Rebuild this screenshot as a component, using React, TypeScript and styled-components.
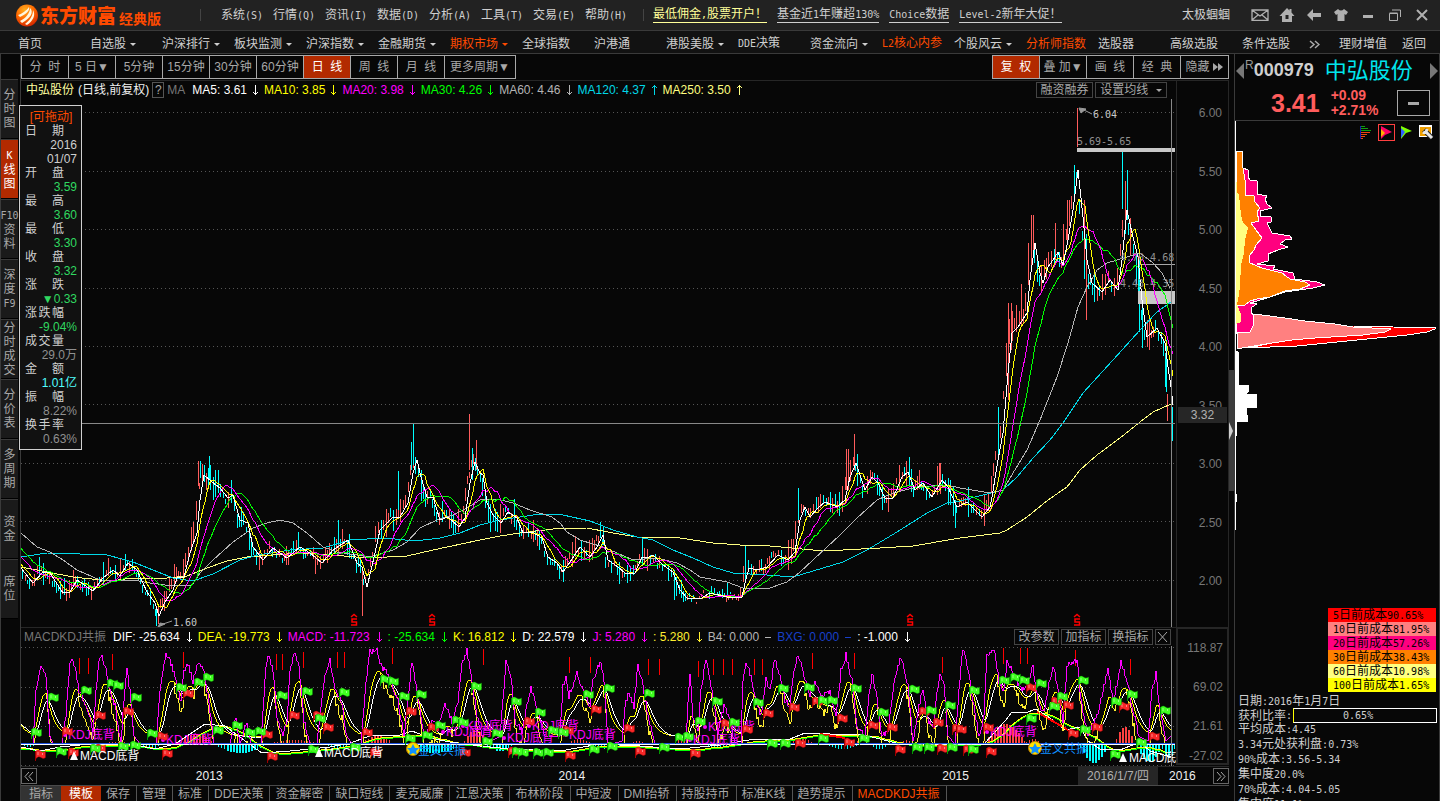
import React from "react";
import styled, { createGlobalStyle, css } from "styled-components";

/* ---------- theme values ---------- */
const C = {
  bg: "#070707",
  bar: "#222222",
  line: "#3a3a3a",
  faint: "#262626",
  frame: "#a8a8a8",
  text: "#a8a8a8",
  bright: "#cfcfcf",
  red: "#b22a00",
  orange: "#ff4a00",
  up: "#ff5c5c",
  cyan: "#00e5ee",
};

const GlobalStyle = createGlobalStyle`
  * { box-sizing: border-box; }
  html, body, #root { height: 100%; }
  body {
    margin: 0;
    overflow: hidden;
    background: ${C.bg};
    color: ${C.text};
    font: 12px/14px "Liberation Sans", "Noto Sans CJK SC", sans-serif;
  }
  button { font: inherit; color: inherit; background: none; border: 0; padding: 0; margin: 0; cursor: pointer; white-space: nowrap; }
  a { color: inherit; text-decoration: none; white-space: nowrap; }
  ul, dl, dd, dt, h1, p { margin: 0; padding: 0; list-style: none; font: inherit; }
  svg { display: block; }
`;

/* Half-width latin runs, six pixels to a character */
const Half = styled.span`
  font-family: "DejaVu Sans Mono", monospace;
  font-size: 10px;
  white-space: pre;
`;

const Mix = ({ children }: { children: string }) => (
  <>
    {children
      .split(/([\x20-\x7e]+)/)
      .filter(Boolean)
      .map((run, i) => (/[\x20-\x7e]/.test(run) ? <Half key={i}>{run}</Half> : run))}
  </>
);

/* ---------- page frame ---------- */
const Page = styled.div`
  display: flex;
  flex-direction: column;
  height: 100vh;
  overflow: hidden;
`;

const TitleBar = styled.header`
  display: flex;
  align-items: center;
  flex: none;
  height: 31px;
  padding: 0 5px 0 16px;
  background: ${C.bar};
  border-bottom: 1px solid ${C.line};
  color: ${C.bright};
`;

const Brand = styled.h1`
  display: flex;
  align-items: center;
  width: 184px;
  color: ${C.orange};
  font-weight: 900;
  font-size: 19px;
  line-height: 30px;
  font-family: "Noto Sans CJK SC", sans-serif;
  white-space: nowrap;
`;
const Edition = styled.small`
  margin: 5px 0 0 3px;
  font-size: 14px;
  font-weight: 700;
  line-height: 20px;
`;
const Logo = styled.svg`
  margin-right: 2px;
`;
const Rule = styled.span`
  width: 1px;
  height: 12px;
  background: #444;
`;
const MenuList = styled.nav`
  display: flex;
  width: 442px;
  padding-left: 20px;
`;
const MenuButton = styled.button`
  width: 52px;
  text-align: left;
`;
const PromoList = styled.nav`
  display: flex;
  gap: 10px;
  margin-left: 9px;
`;
const PromoLink = styled.a<{ $hot?: boolean }>`
  color: ${(p) => (p.$hot ? "#ffff99" : C.bright)};
  border-bottom: 1px solid currentColor;
`;
const UserTools = styled.div`
  display: flex;
  align-items: center;
  margin-left: auto;
`;
const UserName = styled.span`
  margin-right: 16px;
`;
const ToolIcon = styled.button`
  display: grid;
  place-items: center;
  width: 27px;
  height: 20px;
  color: #b0b0b0;
`;

const NavBar = styled.nav`
  display: flex;
  align-items: center;
  flex: none;
  height: 23px;
  padding: 3px 14px 0 18px;
  background: #121212;
  border-bottom: 1px solid ${C.line};
  color: ${C.bright};
`;
const NavLink = styled.a<{ $hot?: boolean }>`
  flex: 0 1 72px;
  min-width: 0;
  color: ${(p) => (p.$hot ? C.orange : C.bright)};
  &:last-of-type { flex-basis: 50px; }
`;
const NavTail = styled.div`
  display: flex;
  gap: 15px;
  margin-left: auto;
`;
const More = styled.a`
  margin-right: 4px;
`;
const Caret = styled.span`
  display: inline-block;
  margin-left: 4px;
  vertical-align: 2px;
  border: 3px solid transparent;
  border-top-color: currentColor;
  border-bottom: 0;
`;

const Body = styled.div`
  position: relative;
  display: flex;
  flex: 1;
  min-height: 0;
`;

/* ---------- left rail ---------- */
const Rail = styled.nav`
  flex: none;
  width: 20px;
  padding: 25px 2px 0 0;
  border-left: 1px solid ${C.line};
  background: ${C.bg};
`;
const RailTab = styled.button<{ $active?: boolean }>`
  display: flex;
  flex-direction: column;
  align-items: center;
  justify-content: center;
  width: 17px;
  height: 60px;
  line-height: 14px;
  border-top: 1px solid ${C.line};
  border-bottom: 1px solid #000;
  background: ${(p) => (p.$active ? C.red : "#1a1a1a")};
  color: ${(p) => (p.$active ? "#fff" : C.text)};
`;

/* ---------- centre ---------- */
const Center = styled.main`
  display: flex;
  flex-direction: column;
  flex: 1;
  min-width: 0;
  border-left: 1px solid ${C.line};
`;
const Toolbar = styled.div`
  display: flex;
  justify-content: space-between;
  flex: none;
  height: 27px;
  padding: 1px 0;
  border-bottom: 1px solid ${C.faint};
`;
const ToolGroup = styled.div`
  display: flex;
  height: 24px;
  border: 1px solid ${C.frame};
`;
const ToolButton = styled.button<{ $active?: boolean; $wide?: boolean }>`
  width: ${(p) => (p.$wide ? 70 : 47)}px;
  border-right: 1px solid ${C.frame};
  background: ${(p) => (p.$active ? C.red : "transparent")};
  color: ${(p) => (p.$active ? "#fff" : C.text)};
  white-space: pre;
  &:last-child { border-right: 0; }
`;
const Forward = styled.svg`
  display: inline;
  margin-left: 2px;
`;

const Pane = styled.section<{ $grow?: boolean }>`
  display: grid;
  grid-template-columns: minmax(0, 1fr) 53px;
  flex: ${(p) => (p.$grow ? "1 1 0" : "none")};
  height: ${(p) => (p.$grow ? "auto" : "139px")};
  min-height: 0;
  ${(p) => !p.$grow && css`border-top: 1px solid ${C.faint};`}
`;
const PlotArea = styled.div`
  display: flex;
  flex-direction: column;
  min-height: 0;
`;
const ReadoutBar = styled.div<{ $end: number }>`
  display: flex;
  align-items: center;
  flex: none;
  height: 18px;
  padding: 0 ${(p) => p.$end}px 0 3px;
  white-space: nowrap;
`;
const StockName = styled.span`
  margin: 0 4px 0 2px;
  color: #ffffa0;
`;
const Adjust = styled.span`
  color: #f0f0f0;
`;
const HelpButton = styled.button`
  width: 12px;
  height: 16px;
  margin: 0 3px;
  border: 1px solid #555;
`;
const SeriesName = styled.span`
  color: #777;
  margin-right: 7px;
`;
const Reading = styled.span<{ $color: string; $gap: number }>`
  display: flex;
  align-items: center;
  gap: ${(p) => p.$gap}px;
  margin-right: 6px;
  color: ${(p) => p.$color};
`;
const PaneButtons = styled.div`
  display: flex;
  gap: 2px;
  margin-left: auto;
`;
const PaneButton = styled.button<{ $w: number }>`
  width: ${(p) => p.$w}px;
  height: 16px;
  line-height: 13px;
  border: 1px solid #444;
`;
const Plot = styled.svg`
  flex: 1;
  width: 100%;
  min-height: 0;
`;
const PriceAxis = styled.ul`
  position: relative;
  display: flex;
  flex-direction: column;
  justify-content: space-between;
  padding: 25px 6px 39px 0;
  border-left: 1px solid ${C.faint};
  border-right: 1px solid ${C.faint};
  color: #777;
  text-align: right;
`;
const CursorPrice = styled.li`
  position: absolute;
  left: 1px;
  right: 1px;
  top: 59.7%;
  height: 16px;
  line-height: 17px;
  background: #262626;
  color: #b0b0b0;
  text-align: center;
`;
const ValueAxis = styled.ul`
  display: grid;
  grid-template-rows: 40fr 40fr 31fr 14px;
  margin-bottom: 1px;
  padding: 12px 4px 0 0;
  border: 2px solid ${C.faint};
  border-top-width: 1px;
  color: #777;
  text-align: right;
`;

const TimeRow = styled.div`
  display: flex;
  align-items: center;
  flex: none;
  height: 19px;
  border-top: 1px solid ${C.faint};
`;
const ScrollButton = styled.button`
  display: grid;
  place-items: center;
  width: 16px;
  height: 16px;
  border: 1px solid #666;
`;
const TimeScale = styled.ol`
  display: grid;
  grid-template-columns: 156fr 363fr 384fr 139fr 80fr 55fr;
  flex: 1;
  margin: 0;
  padding: 0;
  list-style: none;
  color: #f0f0f0;
  line-height: 18px;
`;
const Year = styled.li<{ $inset: number }>`
  padding-left: ${(p) => p.$inset}px;
`;
const CursorDate = styled.li`
  background: #262626;
  color: #b0b0b0;
  text-align: center;
`;
const TabRow = styled.nav`
  display: flex;
  flex: none;
  height: 16px;
  overflow: hidden;
  border-top: 1px solid #4a4a4a;
`;
const Tab = styled.button<{ $kind?: string }>`
  flex: none;
  height: 17px;
  padding: 0 6px 0 5px;
  line-height: 17px;
  border-right: 1px solid #555;
  ${(p) => p.$kind === "head" && css`padding: 0 8px; background: #333; border: 0;`}
  ${(p) => p.$kind === "active" && css`padding: 0 8px; background: ${C.red}; color: #fff; border: 0;`}
  ${(p) => p.$kind === "hot" && css`color: ${C.orange};`}
`;

/* ---------- floating read-out ---------- */
const InfoBox = styled.aside`
  position: absolute;
  left: 19px;
  top: 51px;
  width: 63px;
  padding: 4px 4px 3px 5px;
  background: #111;
  border: 1px solid #d0d0d0;
  line-height: 14px;
`;
const DragHint = styled.p`
  color: ${C.orange};
  text-align: center;
`;
const InfoTerm = styled.dt`
  width: 39px;
  color: ${C.bright};
  text-align-last: justify;
`;
const InfoValue = styled.dd<{ $color: string }>`
  color: ${(p) => p.$color};
  text-align: right;
`;

/* ---------- right ---------- */
const Splitter = styled.div`
  display: grid;
  align-items: center;
  flex: none;
  width: 5px;
`;
const Grip = styled.button`
  display: grid;
  place-items: center start;
  width: 5px;
  height: 121px;
  margin-top: 6px;
  background: #3c3c3c;
`;
const Side = styled.aside`
  flex: none;
  width: 206px;
  overflow: hidden;
  border: solid ${C.line};
  border-width: 0 1px;
`;
const Quote = styled.div`
  height: 67px;
  border-bottom: 1px solid ${C.line};
`;
const QuoteTitle = styled.div`
  display: flex;
  align-items: center;
  height: 34px;
  padding: 0 1px;
`;
const Code = styled.strong`
  margin-left: 1px;
  color: ${C.bright};
  font-size: 18px;
  line-height: 20px;
  margin-top: -4px;
`;
const Exchange = styled.sup`
  color: #999;
  font-size: 12px;
  font-weight: 400;
  line-height: 12px;
`;
const Name = styled.span`
  margin: 0 auto 0 11px;
  color: ${C.cyan};
  font-size: 22px;
  line-height: 30px;
`;
const QuoteRow = styled.div`
  display: flex;
  align-items: center;
  padding: 0 9px 0 36px;
  color: ${C.up};
  font-weight: 700;
`;
const Last = styled.span`
  font-size: 25px;
  line-height: 28px;
`;
const Change = styled.span`
  margin: 0 auto 0 11px;
  font-size: 14px;
  line-height: 15px;
`;
const Collapse = styled.button`
  display: grid;
  place-items: center;
  width: 33px;
  height: 26px;
  border: 1px solid ${C.frame};
`;
const ModeRow = styled.div`
  display: flex;
  justify-content: flex-end;
  gap: 3px;
  height: 22px;
  padding: 3px 4px 0 0;
  border-left: 1px solid #fff;
`;
const ModeButton = styled.button<{ $active?: boolean }>`
  display: grid;
  place-items: center;
  width: 17px;
  height: 17px;
  border: 1px solid ${(p) => (p.$active ? "#ff4040" : "transparent")};
`;
const ChipPlot = styled.svg`
  width: 100%;
  height: auto;
`;
const Legend = styled.ul`
  width: 108px;
  margin: 0 3px 2px auto;
`;
const LegendItem = styled.li<{ $color: string }>`
  height: 14px;
  padding-left: 5px;
  background: ${(p) => p.$color};
  color: #000;
  white-space: nowrap;
`;
const Stats = styled.ul`
  padding-left: 3px;
  color: ${C.bright};
  white-space: nowrap;
`;
const ProfitRow = styled.li`
  display: flex;
  align-items: center;
  height: 13px;
`;
const ProfitBar = styled.span`
  flex: 1;
  height: 15px;
  margin: 0 2px 0 1px;
  padding-left: 49px;
  line-height: 12px;
  border: 1px solid #fff;
  border-left-color: #ffff00;
`;

/* ---------- chart data ---------- */
type Pt = [number, number];
const pts = (s: string): Pt[] => s.trim().split(/\s+/).map((p) => p.split(",").map(Number) as Pt);

const at = (line: Pt[], x: number) => {
  if (x <= line[0][0]) return line[0][1];
  for (let i = 1; i < line.length; i++) {
    if (x <= line[i][0]) {
      const [x0, y0] = line[i - 1];
      const [x1, y1] = line[i];
      return y0 + ((y1 - y0) * (x - x0)) / (x1 - x0);
    }
  }
  return line[line.length - 1][1];
};
const rnd = (n: number) => {
  const v = Math.sin(n * 127.1 + 11.7) * 43758.5453;
  return v - Math.floor(v);
};
const join = (p: Pt[]) => p.map(([x, y]) => `${x},${Math.round(y)}`).join(" ");

const MA5 = pts(`-40,505 -10,535 5,552 21,568 33,583 43,572 50,573 63,593 70,592 77,580 93,591 103,578 113,570 120,576 128,563 137,570 147,592 155,603 159,616 165,602 173,590 177,578 184,577 190,553 197,533 200,500 204,475 212,482 220,488 228,498 233,495 240,520 248,523 253,547 263,560 273,548 287,558 300,547 310,553 322,563 333,550 348,540 357,563 362,567 367,587 375,553 380,530 392,518 400,517 408,503 413,473 417,460 421,477 427,497 433,497 440,520 448,517 459,527 465,518 470,483 475,462 480,473 483,475 487,503 493,515 501,523 508,512 517,518 523,533 532,532 542,538 548,557 557,563 563,572 570,562 580,547 590,557 597,547 603,535 608,560 618,567 625,573 635,573 642,557 647,558 653,555 663,565 673,572 680,590 687,598 700,599 710,593 727,597 742,597 745,583 749,568 757,570 767,567 778,555 788,560 795,552 800,520 805,507 810,517 818,508 825,502 837,507 845,500 850,477 856,463 865,490 872,477 878,483 885,498 893,498 902,477 908,472 915,490 923,483 932,497 942,480 948,487 957,507 967,502 982,517 990,507 992,497 998,460 1003,433 1008,373 1012,333 1018,327 1027,313 1030,280 1035,243 1040,273 1043,283 1048,267 1055,257 1058,252 1063,265 1068,240 1073,210 1078,170 1083,217 1087,260 1092,283 1102,292 1110,280 1118,290 1122,260 1127,210 1132,233 1138,257 1142,300 1147,337 1157,328 1165,343 1168,367 1171,387 1173,405`);
const MA60 = pts(`21,533 37,547 50,552 63,560 77,570 93,577 100,580 133,580 150,583 173,586 192,585 200,573 213,560 233,542 253,528 267,523 280,520 293,523 307,533 323,547 337,552 370,557 393,550 407,542 420,528 437,520 453,515 467,508 480,500 497,499 513,503 530,510 552,517 560,523 567,532 580,540 603,547 617,553 633,560 657,558 677,563 690,570 700,577 727,582 743,588 767,589 787,582 800,572 813,560 827,547 840,535 857,518 877,500 893,493 917,487 947,485 960,488 990,493 1003,490 1013,473 1027,450 1040,420 1057,377 1068,343 1078,307 1087,287 1097,270 1107,263 1127,257 1140,253 1153,263 1162,273 1170,288`);
const MA120 = pts(`21,557 47,553 80,554 107,555 133,562 153,570 173,578 193,581 213,574 240,560 258,555 290,550 323,548 350,540 385,538 415,541 440,538 460,533 480,525 500,520 520,517 540,514 563,515 590,521 613,530 637,537 653,540 673,550 693,558 713,567 733,573 767,575 793,577 813,571 843,562 867,550 897,532 927,513 947,503 960,501 975,497 1003,490 1017,477 1033,458 1050,440 1063,423 1083,393 1113,360 1140,330 1157,312 1171,302`);
const MA250 = pts(`21,567 47,572 73,577 110,581 133,578 167,578 187,576 207,568 227,561 247,557 300,553 333,555 367,558 407,556 433,550 480,540 500,536 520,533 553,529 587,528 613,533 637,537 680,538 713,543 740,545 770,546 813,550 843,550 880,548 913,546 960,538 1000,533 1007,530 1027,517 1048,500 1067,487 1080,470 1097,455 1120,438 1140,422 1153,412 1171,404`);

/* a longer average is the mean of earlier five-day averages, 7.5px apart */
const average = (terms: number): Pt[] => {
  const out: Pt[] = [];
  for (let x = 21; x <= 1173; x += 2) {
    let sum = 0;
    for (let k = 0; k < terms; k++) sum += at(MA5, x - k * 7.5);
    out.push([x, sum / terms]);
  }
  return out;
};

interface Bar { x: number; top: number; bottom: number; up: boolean }
const bars: Bar[] = [];
for (let x = 22; x <= 1165; x += rnd(x) > 0.6 ? 3 : 2) {
  const i = x * 3;
  const mid = at(MA5, x + 3) + (rnd(i + 900) - 0.5) * 8;
  const price = (581 - mid) / 117 + 2;
  const flat = x > 685 && x < 742 ? 0.4 : 1;
  const reach = price * flat * (1.1 + 3.8 * Math.pow(rnd(i), 2));
  const slope = at(MA5, x + 5) - at(MA5, x);
  bars.push({
    x,
    top: Math.round(mid - reach * (0.7 + rnd(i + 40))),
    bottom: Math.round(mid + reach * (0.5 + rnd(i + 80) * 0.9)),
    up: slope + (rnd(i + 200) - 0.5) * 16 < 0,
  });
}
const spike = (x: number, top: number, bottom: number, up: boolean) => bars.push({ x, top, bottom, up });
spike(156, 606, 626, false); spike(158, 606, 623, true); spike(198, 461, 486, true); spike(200, 461, 478, false); spike(202, 464, 484, true);
spike(209, 456, 480, false); spike(338, 520, 545, false);
spike(362, 570, 616, true); spike(398, 471, 510, false); spike(411, 442, 470, false); spike(413, 424, 465, false);
spike(469, 414, 470, true); spike(472, 448, 480, false); spike(476, 440, 470, true); spike(603, 527, 545, false);
spike(563, 560, 582, false); spike(642, 537, 565, false); spike(674, 570, 600, false); spike(745, 545, 580, false);
spike(727, 583, 597, false); spike(798, 488, 520, false); spike(846, 449, 490, true); spike(848, 449, 490, true); spike(854, 434, 470, true);
spike(857, 454, 480, false); spike(909, 457, 480, false); spike(939, 463, 490, true); spike(955, 500, 528, false);
spike(998, 407, 460, false); spike(1008, 303, 400, true); spike(1011, 303, 350, true); spike(1031, 215, 270, true);
spike(1033, 215, 250, true); spike(1055, 223, 260, true); spike(1067, 200, 240, true); spike(1074, 165, 198, false);
spike(1077, 108, 147, true); spike(1084, 200, 260, true); spike(1086, 250, 320, true); spike(1122, 152, 209, false);
spike(1125, 181, 230, true); spike(1127, 170, 220, false); spike(1130, 218, 255, true); spike(1139, 260, 332, false);
spike(1142, 300, 348, false); spike(1166, 340, 392, false); spike(1167, 394, 421, true); spike(1172, 407, 441, false);

const J = pts(`21,742 33,742 36,690 41,665 46,677 50,735 53,743 62,742 66,715 70,662 72,658 76,670 79,690 84,700 90,715 93,730 96,690 99,662 102,653 106,670 110,690 115,705 121,742 124,700 127,668 130,690 134,735 140,743 156,742 160,690 166,651 170,660 175,675 181,700 184,670 188,663 193,680 199,659 204,672 209,700 214,743 230,743 236,715 240,743 247,720 251,743 261,742 266,665 269,654 273,670 277,715 283,735 287,720 290,670 294,651 299,665 304,720 310,743 317,742 324,680 330,658 335,690 341,700 347,735 352,743 361,742 366,680 370,650 377,649 381,665 386,670 391,680 398,700 404,735 409,690 412,659 417,690 424,735 433,720 438,728 445,703 452,720 458,700 462,665 467,649 472,680 478,720 485,743 500,735 503,700 506,657 511,675 515,720 522,730 528,700 531,687 536,705 545,735 560,735 563,685 566,678 569,695 577,671 583,690 590,705 593,680 601,659 605,690 608,743 622,740 625,705 629,691 634,705 638,663 642,680 648,715 655,743 686,743 688,700 690,673 693,715 698,730 701,690 706,658 712,690 718,730 724,705 729,715 735,743 741,742 743,680 746,659 751,675 756,700 761,715 766,678 770,690 775,657 780,675 785,700 790,705 794,670 798,652 803,670 809,695 815,683 822,695 830,690 836,715 841,670 846,654 852,680 857,725 865,735 869,695 872,673 876,690 882,735 888,730 894,680 901,656 908,685 913,740 920,700 923,687 928,720 934,725 937,690 940,673 944,680 948,735 955,743 959,690 962,655 964,648 968,668 973,700 979,735 984,715 987,652 995,651 999,680 1004,690 1007,660 1012,670 1022,690 1028,680 1033,665 1038,700 1044,712 1049,680 1054,666 1058,690 1063,720 1067,665 1072,662 1077,658 1081,700 1088,735 1097,715 1103,690 1108,666 1113,700 1118,680 1121,661 1127,680 1133,710 1139,735 1148,740 1152,690 1156,672 1160,710 1166,740 1171,735`);
const jLine: Pt[] = [];
const kLine: Pt[] = [];
const dLine: Pt[] = [];
const fastLine: Pt[] = [];
{
  let k = 722;
  let d = 722;
  let f = 730;
  for (let x = 21; x <= 1172; x++) {
    const j = at(J, x);
    const target = j > 715 ? 735 : j + 14;
    k += (target - k) * (target < k ? 0.18 : 0.13);
    d += (k - d) * 0.22;
    f += (j + 12 - f) * 0.45;
    jLine.push([x, j + (j < 735 ? (rnd(x) - 0.5) * 6 : 0)]);
    kLine.push([x, k]);
    dLine.push([x, d + 1]);
    fastLine.push([x, f > k ? Math.min(742, f + rnd(x + 5) * 10) : k]);
  }
}
const DIF = pts(`21,746 40,750 60,746 90,743 130,743 155,748 175,743 190,733 205,723 225,725 245,740 262,752 290,750 330,746 350,742 370,735 400,734 412,730 430,737 450,741 480,745 500,747 560,750 600,743 640,745 680,748 720,744 755,738 790,738 805,732 830,733 860,733 880,738 900,743 985,742 1005,720 1012,711 1025,712 1036,708 1050,717 1065,729 1080,726 1088,740 1100,748 1120,749 1140,741 1150,750 1171,756`);
const DEA: Pt[] = [];
for (let x = 21; x <= 1172; x += 6) DEA.push([x, (at(DIF, x) + at(DIF, x - 10) + at(DIF, x - 20)) / 3 + 2]);

/* start, end, tallest bar: above the zero line when positive */
const humps = [
  [21, 34, -3], [100, 135, 2], [140, 160, -5], [178, 213, 10], [215, 265, -9], [268, 320, 4], [325, 350, -4], [362, 392, 8],
  [405, 462, -9], [464, 486, 14], [487, 512, -7], [568, 590, 5], [592, 626, -5], [630, 645, 3], [672, 690, 4], [705, 735, -4],
  [790, 812, 6], [826, 858, -5], [845, 860, 4], [870, 888, -5], [900, 912, 4], [985, 1024, 20], [1026, 1040, 5],
  [1080, 1106, -19], [1116, 1132, 17], [1137, 1160, -18], [1162, 1174, -14],
];
const histogram = humps.flatMap(([from, to, peak]) => {
  const out: { x: number; h: number }[] = [];
  for (let x = from; x <= to; x += 3) out.push({ x, h: Math.round(peak * Math.sin((Math.PI * (x - from + 2)) / (to - from + 4))) });
  return out;
});

const greenFlags = pts(`53,697 86,690 112,683 118,685 136,697 181,687 199,682 208,677 282,695 307,691 344,692 385,679 393,681 404,696 421,694 476,686 36,732 61,751 95,748 123,746 135,745 152,733 218,730 237,725 250,732 260,731 320,718 313,749 355,747 410,738 427,735 440,725 457,720 463,722 516,701 540,712 588,694 609,688 649,693 717,701 758,702 783,688 809,687 823,700 832,700 856,688 883,712 914,689 931,710 950,705 497,733 487,741 553,730 563,732 523,752 538,752 548,752 517,751 594,749 612,746 664,747 700,721 734,722 680,737 688,736 772,743 785,743 823,738 864,738 917,747 929,747 952,747 974,690 1004,680 1015,677 1024,680 1041,683 1062,696 1054,706 1083,680 1116,701 1132,694 1165,710 1031,718 1085,729 1141,742 1115,754 973,749`);
const redFlags = pts(`67,731 40,754 73,752 100,715 100,748 128,711 162,736 167,753 188,693 267,734 272,756 294,715 328,727 318,715 367,732 375,752 411,711 433,727 465,752 529,721 568,730 513,751 570,755 596,709 629,728 640,751 695,753 726,723 747,729 768,713 794,707 817,701 842,718 873,725 892,727 924,711 938,722 800,743 849,742 900,749 942,748 957,728 961,729 988,727 991,751 1031,687 1056,701 1068,705 1073,733 1097,727 1124,706 1154,736 968,749`);
const marks = pts(`79,657 88,657 112,653 183,651 276,653 282,653 303,651 337,651 344,651 392,647 483,648 569,656 590,656 648,658 659,658 698,660 713,658 723,658 732,658 754,658 762,658 812,652 854,652 942,656 1003,647 1020,647 1027,647 1075,649 1130,658`);
const kdjNotes = pts(`68,738 166,743 446,735 466,729 507,741 532,729 569,738 708,730 693,743 990,735`);

/* ---------- drawings ---------- */
const Arrow = ({ dir }: { dir: "up" | "down" | "flat" }) => (
  <svg width="6" height="12" viewBox="0 0 6 12" fill="none" stroke="currentColor" aria-hidden="true">
    {dir === "flat" ? <path d="M0 6.5h6" /> : <path d={dir === "down" ? "M3.5 1v10M1 8l2.500 2.500L6 8" : "M3.5 1v10M1 4l2.500-2.500L6 4"} />}
  </svg>
);

const PriceChart = () => (
  <Plot viewBox="21 99 1155 528" preserveAspectRatio="xMaxYMid meet" role="img" aria-label="日线K线图">
    <g shapeRendering="crispEdges" fill="none">
      {[112.5, 171.5, 229.5, 288.5, 346.5, 404.5, 463.5, 521.5, 580.5].map((y) => (
        <path key={y} d={`M21 ${y}H1175`} stroke="#555" strokeDasharray="1 3" />
      ))}
      {bars.map((b, i) => (
        <path key={i} d={`M${b.x + 0.5} ${b.top}V${b.bottom}`} stroke={b.up ? "#ff5c5c" : "#00ffff"} />
      ))}
      <path d="M1077 150H1175" stroke="#c8c8c8" strokeWidth="4" />
      <path d="M1138 297H1175" stroke="#c8c8c8" strokeWidth="13" />
      <path d="M1138 264.5H1175" stroke="#a8a8a8" />
      <polyline points={join(MA250)} stroke="#ffff80" />
      <polyline points={join(MA120)} stroke="#00d8e8" />
      <polyline points={join(MA60)} stroke="#b4b4b4" />
      <polyline points={join(average(6))} stroke="#00ff00" />
      <polyline points={join(average(4))} stroke="#ff00ff" />
      <polyline points={join(average(2))} stroke="#ffff00" />
      <polyline points={join(MA5)} stroke="#ffffff" />
      <path d="M21 423.5H1175M1171.5 99V627" stroke="#888" />
    </g>
    <g fontFamily="DejaVu Sans Mono, monospace" fontSize="10" fill="#909090">
      <text x="1077" y="145">5.69-5.65</text>
      <text x="1120" y="261">4.70-4.68</text>
      <text x="1120" y="287">4.43-4.35</text>
      <text x="1093" y="118" fill="#c8c8c8">6.04</text>
      <text x="173" y="626" fill="#c8c8c8">1.60</text>
    </g>
    <path d="M1079 108l7 1-5 4zM1084 110l8 4M158 627l7-3-5 -1zM163 624l9-3" fill="#999" stroke="#999" />
    <g fill="none" stroke="#ff0000">
      {[354, 432, 910, 1077].map((x) => (
        <path key={x} d={`M${x - 3} 617l3-2.500 3 2.500M${x + 3} 619h-5v3h4.500v3h-5.500`} strokeWidth="1.500" />
      ))}
    </g>
  </Plot>
);

const Flag = ({ x, y, light, dark }: { x: number; y: number; light: string; dark: string }) => (
  <g>
    <path d={`M${x - 4.5} ${y - 4}V${y + 6}`} stroke={dark} strokeWidth="1" />
    <path d={`M${x - 4} ${y - 4}q2-2 4.500 0t5 0v6.500q-2 2-4.500 0t-5 1z`} fill={light} stroke={dark} strokeWidth="0.4" />
    <path d={`M${x - 2} ${y - 3}v3M${x + 2.5} ${y - 2}v2`} stroke="#fff" strokeOpacity="0.45" />
  </g>
);

const Star = ({ x, y }: { x: number; y: number }) => (
  <g>
    <circle cx={x} cy={y} r="6.5" fill="#ffe000" stroke="#c08000" />
    <path d={`M${x - 6} ${y - 1}h4l2-4 2 4h4l-3 3 1 4-4-2-4 2 1-4z`} fill="#1090ff" />
  </g>
);

const OscillatorChart = () => (
  <Plot viewBox="21 645 1155 120" preserveAspectRatio="xMaxYMid meet" role="img" aria-label="MACDKDJ共振">
    <g shapeRendering="crispEdges" fill="none">
      {[646.5, 686.5, 725.5, 764.5].map((y) => (
        <path key={y} d={`M21 ${y}H1175`} stroke="#555" strokeDasharray="1 3" />
      ))}
      {marks.map(([x, y]) => (
        <path key={x} d={`M${x + 0.5} ${y}v16`} stroke="#ff0000" />
      ))}
      {histogram.map((b, i) => (
        <path key={i} d={`M${b.x + 0.5} 743v${-b.h}`} stroke={b.h > 0 ? "#ff4040" : "#00ffff"} strokeWidth={Math.abs(b.h) > 5 ? 2 : 1} />
      ))}
      <polyline points={join(DEA)} stroke="#00ff00" />
      <polyline points={join(DEA.map(([x, y]) => [x, y - 1] as Pt))} stroke="#ffff00" />
      <polyline points={join(DIF)} stroke="#fff" />
      <path d="M1037 711L1068 729M820 733L845 737" stroke="#ff0000" strokeWidth="2" />
      <polyline points={join(fastLine)} stroke="#ffee30" />
      <polyline points={join(kLine)} stroke="#ffff00" />
      <polyline points={join(dLine)} stroke="#fff" />
      <polyline points={join(jLine)} stroke="#ff00ff" />
      <path d="M21 742.5H1175" stroke="#1c50e0" />
      <path d="M21 743.5H1175" stroke="#fff" />
    </g>
    <g fill="#ff00ff" fontSize="12">
      {kdjNotes.map(([x, y]) => (
        <React.Fragment key={x}>
          <circle cx={x - 3} cy={y - 4} r="2" />
          <text x={x} y={y}>KDJ底背</text>
        </React.Fragment>
      ))}
    </g>
    {redFlags.map(([x, y], i) => (
      <Flag key={i} x={x} y={y} light="#f82828" dark="#a00000" />
    ))}
    {greenFlags.map(([x, y], i) => (
      <Flag key={i} x={x} y={y} light="#40ff20" dark="#009a00" />
    ))}
    <Star x={413} y={748} />
    <Star x={1035} y={747} />
    <g fontSize="12">
      <text x="418" y="754" fill="#1090ff">金叉共振</text>
      <text x="1040" y="752" fill="#1090ff">金叉共振</text>
      <g fill="#fff">
        <path d="M70 759l4-9 4 9zM315 756l4-9 4 9zM1119 761l4-9 4 9z" />
        <text x="80" y="759">MACD底背</text>
        <text x="324" y="756">MACD底背</text>
        <text x="1129" y="761">MACD底背</text>
      </g>
    </g>
    <path d="M1171.5 645V765" stroke="#888" shapeRendering="crispEdges" />
  </Plot>
);

const ChipChart = () => (
  <ChipPlot viewBox="1235 143 204 465" role="img" aria-label="筹码分布">
    <g stroke="#fff" strokeWidth="1" shapeRendering="crispEdges">
      <polygon fill="#ff007f" points="1236,151 1242,151 1243,168 1248,170 1248,177 1250,180 1257,181 1257,194 1267,196 1265,199 1267,204 1272,208 1260,211 1260,216 1271,217 1271,222 1267,223 1272,233 1290,236 1292,239 1285,240 1280,244 1288,247 1278,250 1268,254 1268,261 1257,264 1275,266 1273,269 1293,273 1295,279 1317,282 1325,285 1313,288 1285,292 1270,297 1257,301 1250,303 1257,304 1252,307 1251,313 1255,316 1254,326 1250,333 1236,333" />
      <path d="M1236.5 151V305M1235.5 143V530M1236.5 494v8" />
    </g>
    <g shapeRendering="crispEdges">
      <polygon fill="#ff8000" stroke="#fff" strokeWidth="1" points="1236,151 1242,151 1243,168 1245,180 1245,195 1254,196 1255,202 1260,208 1257,212 1259,221 1251,223 1256,230 1262,238 1256,245 1254,250 1249,256 1250,263 1262,268 1282,273 1290,279 1305,282 1310,285 1300,289 1285,291 1270,297 1257,299 1250,301 1245,305 1236,305" />
      <polygon fill="#ffff80" points="1236,170 1237,193 1239,195 1241,215 1243,223 1248,228 1245,240 1244,253 1241,265 1240,285 1239,295 1237,305 1241,314 1241,322 1236,324" />
      <polygon fill="#ff0000" stroke="#fff" strokeWidth="1" points="1353,326 1393,327 1435,328 1435,329 1427,332 1407,335 1367,339 1337,342 1297,346 1270,347 1248,348" />
      <polygon fill="#ff8080" stroke="#fff" strokeWidth="1" points="1237,333 1250,332 1253,326 1254,314 1285,318 1305,321 1335,324 1353,327 1391,329 1385,332 1363,335 1315,338 1292,340 1272,343 1248,347 1237,349" />
      <polygon fill="#fff" points="1235,350 1239,352 1239,385 1249,385 1249,391 1247,394 1257,394 1257,408 1247,408 1248,422 1237,422 1237,436 1235,436" />
    </g>
  </ChipPlot>
);

/* ---------- content ---------- */
const menus = ["系统(S)", "行情(Q)", "资讯(I)", "数据(D)", "分析(A)", "工具(T)", "交易(E)", "帮助(H)"];
const promos = ["最低佣金,股票开户！", "基金近1年赚超130%", "Choice数据", "Level-2新年大促！"];
const nav: [string, boolean?, boolean?][] = [
  ["首页"], ["自选股", true], ["沪深排行", true], ["板块监测", true], ["沪深指数", true], ["金融期货", true],
  ["期权市场", true, true], ["全球指数"], ["沪港通"], ["港股美股", true], ["DDE决策"], ["资金流向", true],
  ["L2核心内参", false, true], ["个股风云", true], ["分析师指数", false, true], ["选股器"], ["高级选股"], ["条件选股"],
];
const rail = [["分", "时", "图"], ["K", "线", "图"], ["F10", "资", "料"], ["深", "度", "F9"], ["分", "时", "成", "交"], ["分", "价", "表"], ["多", "周", "期"], ["资", "金"], ["席", "位"]];
const periods = ["分  时", "5 日▼", "5分钟", "15分钟", "30分钟", "60分钟", "日  线", "周  线", "月  线", "更多周期▼"];
const tools = ["复  权", "叠 加▼", "画  线", "经  典", "隐藏"];
const averages: [string, string, "up" | "down"][] = [
  ["MA5: 3.61", "#ffffff", "down"], ["MA10: 3.85", "#ffff00", "down"], ["MA20: 3.98", "#ff00ff", "down"], ["MA30: 4.26", "#00ff00", "down"],
  ["MA60: 4.46", "#b4b4b4", "down"], ["MA120: 4.37", "#00d8e8", "up"], ["MA250: 3.50", "#ffff80", "up"],
];
const readings: [string, string, "up" | "down" | "flat"][] = [
  ["DIF: -25.634", "#ffffff", "down"], ["DEA: -19.773", "#ffff00", "down"], ["MACD: -11.723", "#ff00ff", "down"], [": -25.634", "#00ff00", "down"],
  ["K: 16.812", "#ffff00", "down"], ["D: 22.579", "#ffffff", "down"], ["J: 5.280", "#ff00ff", "down"], [": 5.280", "#ffee30", "down"],
  ["B4: 0.000", "#b4b4b4", "flat"], ["BXG: 0.000", "#1840c8", "flat"], [": -1.000", "#ffffff", "down"],
];
const G = "#30d860";
const info: [string, string[], string][] = [
  ["日期", ["2016", "01/07"], C.bright], ["开盘", ["3.59"], G], ["最高", ["3.60"], G], ["最低", ["3.30"], G], ["收盘", ["3.32"], G],
  ["涨跌", ["▼0.33"], G], ["涨跌幅", ["-9.04%"], G], ["成交量", ["29.0万"], "#909090"], ["金额", ["1.01亿"], "#50ffff"],
  ["振幅", ["8.22%"], "#909090"], ["换手率", ["0.63%"], "#909090"],
];
const tabs = ["指标", "模板", "保存", "管理", "标准", "DDE决策", "资金解密", "缺口短线", "麦克威廉", "江恩决策", "布林阶段", "中短波", "DMI抬轿", "持股持币", "标准K线", "趋势提示", "MACDKDJ共振"];
const tabKind = (i: number) => (i === 0 ? "head" : i === 1 ? "active" : i === tabs.length - 1 ? "hot" : undefined);
const legend = [
  ["5日前成本90.65%", "#ff0000"], ["10日前成本81.95%", "#ff8080"], ["20日前成本57.26%", "#ff007f"],
  ["30日前成本38.43%", "#ff8000"], ["60日前成本10.98%", "#ffff80"], ["100日前成本1.65%", "#ffff00"],
];
const stats = ["平均成本:4.45", "3.34元处获利盘:0.73%", "90%成本:3.56-5.34", "集中度20.0%", "70%成本:4.04-5.05", "集中度11.1%"];

const windowIcons: [string, React.ReactNode][] = [
  ["邮件", <svg width="18" height="12" viewBox="0 0 18 12" fill="none" stroke="currentColor" strokeWidth="1.300"><path d="M1 1h16v10.500H1zM1 1l8 6 8-6M1 11l6-5M17 11l-6-5" /></svg>],
  ["主页", <svg width="16" height="14" viewBox="0 0 16 14" fill="currentColor"><path d="M8 0l2.500 2.500V1h2v3.500L15.500 8H13v6H3V8H.5zM6.500 7v4h3V7z" fillRule="evenodd" /></svg>],
  ["后退", <svg width="14" height="12" viewBox="0 0 14 12" fill="currentColor"><path d="M6 0v4h8v4H6v4L0 6z" /></svg>],
  ["换肤", <svg width="14" height="12" viewBox="0 0 14 12" fill="currentColor"><path d="M4 0q3 3 6 0l4 3-2 3-1.500-1v7h-7V5L2 6 0 3z" /></svg>],
  ["最小化", <svg width="10" height="12" viewBox="0 0 10 12" fill="currentColor"><path d="M0 6h10v3H0z" /></svg>],
  ["还原", <svg width="12" height="12" viewBox="0 0 12 12" fill="none" stroke="currentColor"><path d="M.5 4.500h8v7h-8zM3 1h8.500v7M.5 4h8" /></svg>],
  ["关闭", <svg width="12" height="12" viewBox="0 0 12 12" fill="none" stroke="currentColor" strokeWidth="2"><path d="M1 1l10 10M11 1L1 11" /></svg>],
];

export default function App() {
  return (
    <Page>
      <GlobalStyle />
      <TitleBar>
        <Brand>
          <Logo width="22" height="23" viewBox="0 0 22 23" aria-hidden="true">
            <defs>
              <radialGradient id="ball" cx="40%" cy="25%" r="80%">
                <stop offset="0" stopColor="#ffb020" />
                <stop offset="0.5" stopColor="#ff6a00" />
                <stop offset="1" stopColor="#d02000" />
              </radialGradient>
            </defs>
            <circle cx="11" cy="11.500" r="11" fill="url(#ball)" />
            <path d="M2 11C6 10 11 6 13 3c1 3-2 7-9 10zM4 17C10 14 14 9 14 4c4 4 1 10-8 15zM9 20C14 16 17 12 17 6c3 5 0 11-6 15z" fill="#fff6e0" />
          </Logo>
          东方财富<Edition>经典版</Edition>
        </Brand>
        <Rule />
        <MenuList>
          {menus.map((m) => <MenuButton key={m}><Mix>{m}</Mix></MenuButton>)}
        </MenuList>
        <Rule />
        <PromoList>
          {promos.map((p, i) => <PromoLink key={p} href="#" $hot={i === 0}><Mix>{p}</Mix></PromoLink>)}
        </PromoList>
        <UserTools>
          <UserName>太极蝈蝈</UserName>
          {windowIcons.map(([label, icon]) => <ToolIcon key={label} aria-label={label}>{icon}</ToolIcon>)}
        </UserTools>
      </TitleBar>

      <NavBar>
        {nav.map(([label, caret, hot]) => (
          <NavLink key={label} href="#" $hot={hot}><Mix>{label}</Mix>{caret && <Caret />}</NavLink>
        ))}
        <NavTail>
          <More href="#" aria-label="更多">
            <svg width="11" height="14" viewBox="0 0 11 14" fill="none" stroke="#aaa" strokeWidth="1.500"><path d="M1 4l4 3.500L1 11M6 4l4 3.500L6 11" /></svg>
          </More>
          <a href="#">理财增值</a>
          <a href="#">返回</a>
        </NavTail>
      </NavBar>

      <Body>
        <Rail>
          {rail.map((chars, i) => (
            <RailTab key={i} $active={i === 1}>{chars.map((c) => <span key={c}><Mix>{c}</Mix></span>)}</RailTab>
          ))}
        </Rail>

        <Center>
          <Toolbar>
            <ToolGroup>
              {periods.map((p, i) => <ToolButton key={p} $active={i === 6} $wide={i === 9}>{p}</ToolButton>)}
            </ToolGroup>
            <ToolGroup>
              {tools.map((t, i) => (
                <ToolButton key={t} $active={i === 0}>
                  {t}
                  {i === 4 && (
                    <Forward width="12" height="8" viewBox="0 0 12 8" fill="currentColor"><path d="M1 0l5 4-5 4zM6 0l5 4-5 4z" /></Forward>
                  )}
                </ToolButton>
              ))}
            </ToolGroup>
          </Toolbar>

          <Pane $grow>
            <PlotArea>
              <ReadoutBar $end={9}>
                <StockName>中弘股份</StockName>
                <Adjust>(日线,前复权)</Adjust>
                <HelpButton>?</HelpButton>
                <SeriesName>MA</SeriesName>
                {averages.map(([t, color, dir]) => <Reading key={t} $color={color} $gap={5}>{t}<Arrow dir={dir} /></Reading>)}
                <PaneButtons>
                  <PaneButton $w={57}>融资融券</PaneButton>
                  <PaneButton $w={72}>设置均线 <Caret /></PaneButton>
                </PaneButtons>
              </ReadoutBar>
              <PriceChart />
            </PlotArea>
            <PriceAxis>
              {["6.00", "5.50", "5.00", "4.50", "4.00", "3.50", "3.00", "2.50", "2.00"].map((v) => <li key={v}>{v}</li>)}
              <CursorPrice>3.32</CursorPrice>
            </PriceAxis>
          </Pane>

          <Pane>
            <PlotArea>
              <ReadoutBar $end={5}>
                <SeriesName>MACDKDJ共振</SeriesName>
                {readings.map(([t, color, dir], i) => <Reading key={i} $color={color} $gap={6}>{t}<Arrow dir={dir} /></Reading>)}
                <PaneButtons>
                  <PaneButton $w={45}>改参数</PaneButton>
                  <PaneButton $w={45}>加指标</PaneButton>
                  <PaneButton $w={45}>换指标</PaneButton>
                  <PaneButton $w={16} aria-label="关闭指标">
                    <svg width="14" height="14" viewBox="0 0 14 14" stroke="currentColor"><path d="M2 2l9 10M11 2L2 12" /></svg>
                  </PaneButton>
                </PaneButtons>
              </ReadoutBar>
              <OscillatorChart />
            </PlotArea>
            <ValueAxis>
              {["118.87", "69.02", "21.61", "-27.02"].map((v) => <li key={v}>{v}</li>)}
            </ValueAxis>
          </Pane>

          <TimeRow>
            <ScrollButton aria-label="向左">
              <svg width="10" height="9" viewBox="0 0 10 9" fill="none" stroke="currentColor"><path d="M5 0L1 4.500 5 9M9 0L5 4.500 9 9" /></svg>
            </ScrollButton>
            <TimeScale>
              <li />
              <Year $inset={3}>2013</Year>
              <Year $inset={3}>2014</Year>
              <Year $inset={3}>2015</Year>
              <CursorDate>2016/1/7/四</CursorDate>
              <Year $inset={11}>2016</Year>
            </TimeScale>
            <ScrollButton aria-label="向右">
              <svg width="10" height="9" viewBox="0 0 10 9" fill="none" stroke="currentColor"><path d="M1 0l4 4.500L1 9M5 0l4 4.500L5 9" /></svg>
            </ScrollButton>
          </TimeRow>
          <TabRow>
            {tabs.map((t, i) => <Tab key={t} $kind={tabKind(i)}>{t}</Tab>)}
          </TabRow>
        </Center>

        <Splitter>
          <Grip aria-label="收起侧栏">
            <svg width="4" height="18" viewBox="0 0 4 18" fill="#d0d0d0"><path d="M0 0l4 9-4 9z" /></svg>
          </Grip>
        </Splitter>

        <Side>
          <Quote>
            <QuoteTitle>
              <svg width="8" height="16" viewBox="0 0 8 16" fill="#777"><path d="M8 0v16L0 8z" /></svg>
              <Code><Exchange>R</Exchange>000979</Code>
              <Name>中弘股份</Name>
              <svg width="8" height="16" viewBox="0 0 8 16" fill="#777"><path d="M0 0v16l8-8z" /></svg>
            </QuoteTitle>
            <QuoteRow>
              <Last>3.41</Last>
              <Change>+0.09<br />+2.71%</Change>
              <Collapse aria-label="收起">
                <svg width="11" height="3" viewBox="0 0 11 3" fill="#a8a8a8"><path d="M0 0h11v3H0z" /></svg>
              </Collapse>
            </QuoteRow>
          </Quote>
          <ModeRow>
            <ModeButton aria-label="分布">
              <svg width="13" height="13" viewBox="0 0 13 13" fill="none" shapeRendering="crispEdges">
                <path d="M.5 0v13" stroke="#1818b0" />
                <path d="M1 .5h4M1 2.500h7M1 4.500h10" stroke="#10a010" />
                <path d="M1 6.500h9M1 8.500h6M1 10.500h4M1 12.500h2" stroke="#f04810" />
              </svg>
            </ModeButton>
            <ModeButton $active aria-label="成本">
              <svg width="13" height="13" viewBox="0 0 13 13"><path d="M1 0l11 6-7 3-4 4z" fill="#ff0066" /><path d="M1 3l4 4-4 4z" fill="#ffb000" /></svg>
            </ModeButton>
            <ModeButton aria-label="火焰">
              <svg width="13" height="13" viewBox="0 0 13 13"><path d="M1 0l11 5-6 2-5 6z" fill="#80ff00" /><path d="M1 2l4 4-4 6z" fill="#3060ff" /></svg>
            </ModeButton>
            <ModeButton aria-label="设置">
              <svg width="15" height="15" viewBox="0 0 15 15">
                <path d="M0 0h13v12H0z" fill="#fff" />
                <path d="M1 2h11v9H1z" fill="#f0a000" />
                <path d="M5 5l3 3 5 5" fill="none" stroke="#222" strokeWidth="5" />
                <path d="M4 7q3 2 4-3M7 7l6 6" fill="none" stroke="#e8e8e8" strokeWidth="3" />
              </svg>
            </ModeButton>
          </ModeRow>
          <ChipChart />
          <Legend>
            {legend.map(([t, color]) => <LegendItem key={t} $color={color}><Mix>{t}</Mix></LegendItem>)}
          </Legend>
          <Stats>
            <li><Mix>日期:2016年1月7日</Mix></li>
            <ProfitRow><Mix>获利比率:</Mix><ProfitBar><Half>0.65%</Half></ProfitBar></ProfitRow>
            {stats.map((s) => <li key={s}><Mix>{s}</Mix></li>)}
          </Stats>
        </Side>

        <InfoBox>
          <DragHint>[可拖动]</DragHint>
          <dl>
            {info.map(([term, values, color]) => (
              <React.Fragment key={term}>
                <InfoTerm>{term.length === 2 ? term.split("").join(" ") : term}</InfoTerm>
                {values.map((v) => <InfoValue key={v} $color={color}>{v}</InfoValue>)}
              </React.Fragment>
            ))}
          </dl>
        </InfoBox>
      </Body>
    </Page>
  );
}
